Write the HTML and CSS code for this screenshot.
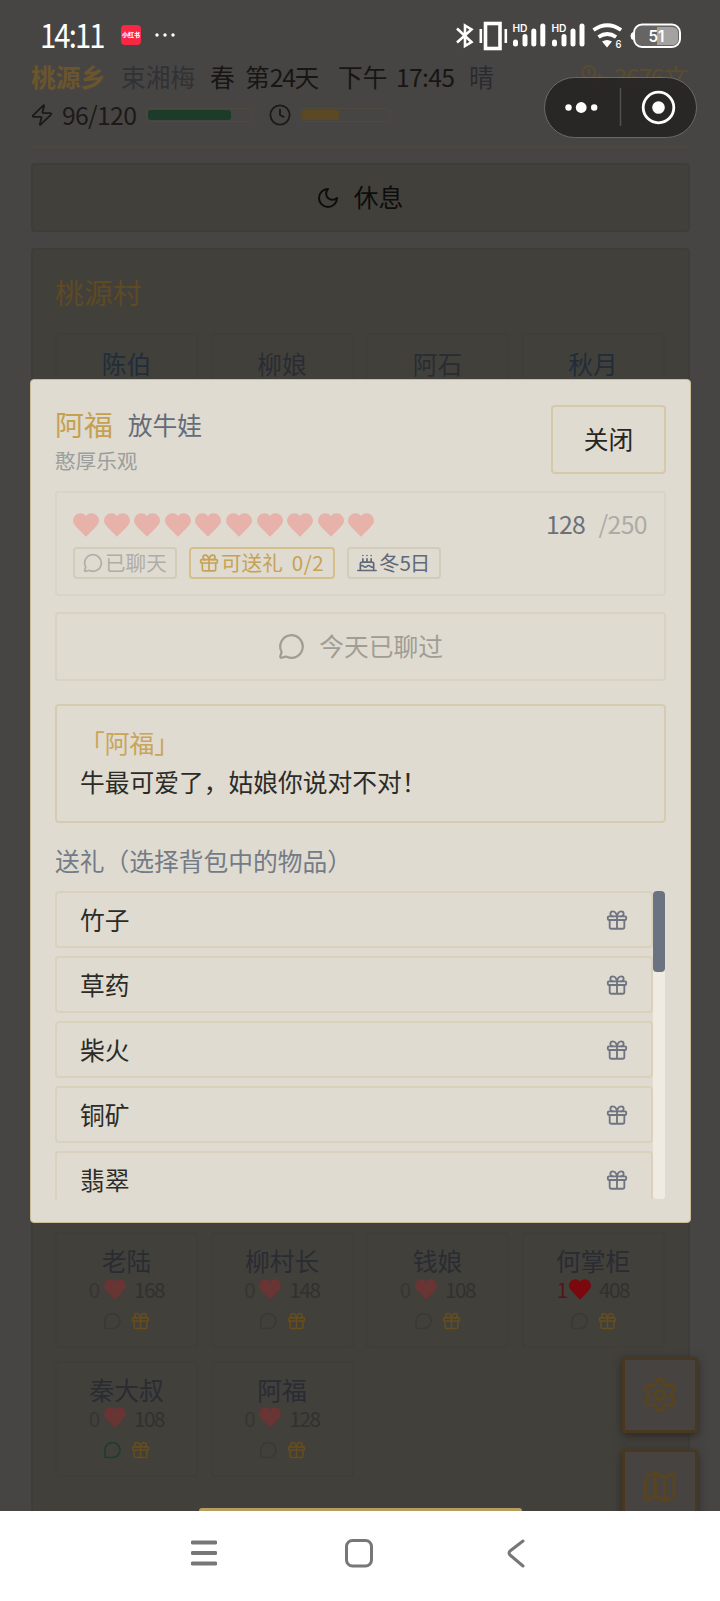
FILE: index.html
```html
<!DOCTYPE html>
<html lang="zh-CN">
<head>
<meta charset="utf-8">
<title>桃源乡</title>
<link rel="stylesheet" href="styles.css">
</head>
<body>
<svg class="sprite" width="0" height="0">
  <symbol id="heart" viewBox="1 2 22 20" preserveAspectRatio="none"><path fill="currentColor" stroke="none" d="M19.4 14.4C21 12.8 23 10.900 23 8.300A6.200 6.200 0 0 0 16.800 2.200C14.900 2.200 13.500 2.800 12 4.400 10.500 2.800 9.100 2.200 7.200 2.200A6.200 6.200 0 0 0 1 8.300C1 10.900 3 12.800 4.600 14.400L12 21.800Z"/></symbol>
  <symbol id="chat" viewBox="0 0 24 24"><path d="M2.992 16.342a2 2 0 0 1 .094 1.167l-1.065 3.290a1 1 0 0 0 1.236 1.168l3.413-.998a2 2 0 0 1 1.099.092 10 10 0 1 0-4.777-4.719"/></symbol>
  <symbol id="bubble" viewBox="0 0 24 24"><path d="M2.500 21.500V12A9.500 9.500 0 1 1 12 21.500Z"/></symbol>
  <symbol id="gift" viewBox="0 0 24 24"><rect x="2" y="8" width="20" height="4" rx="1"/><path d="M12 8v13.500M20 12v7.500a2 2 0 0 1-2 2H6a2 2 0 0 1-2-2V12M7.500 8a2.500 2.500 0 0 1 0-5.500A4.800 8 0 0 1 12 8a4.800 8 0 0 1 4.500-5.500 2.500 2.500 0 0 1 0 5.500"/></symbol>
  <symbol id="cake" viewBox="0 0 24 24"><path d="M20 21v-8a2 2 0 0 0-2-2H6a2 2 0 0 0-2 2v8M4 16s.5-1 2-1 2.500 2 4 2 2.500-2 4-2 2.500 2 4 2 2-1 2-1M1 21h22M7 7v4M12 7v4M17 7v4M7 3h.01M12 3h.01M17 3h.01"/></symbol>
  <symbol id="moon" viewBox="0 0 24 24"><path d="M12 3a6 6 0 0 0 9 9 9 9 0 1 1-9-9Z"/></symbol>
  <symbol id="clock" viewBox="0 0 24 24"><circle cx="12" cy="12" r="10.500"/><path d="M12 6v6l4 2"/></symbol>
  <symbol id="zap" viewBox="0 0 24 24"><path d="M3 14a1 1 0 0 1-.78-1.630L13.500 1.500a.5.5 0 0 1 .86.46L12.500 9A1 1 0 0 0 13.400 10H21a1 1 0 0 1 .78 1.630L10.500 22.500a.5.5 0 0 1-.86-.46L11.500 15A1 1 0 0 0 10.600 14Z"/></symbol>
  <symbol id="gear" viewBox="0 0 24 24"><path d="M9.671 4.136a2.340 2.340 0 0 1 4.659 0 2.340 2.340 0 0 0 3.319 1.915 2.340 2.340 0 0 1 2.330 4.033 2.340 2.340 0 0 0 0 3.831 2.340 2.340 0 0 1-2.330 4.033 2.340 2.340 0 0 0-3.319 1.915 2.340 2.340 0 0 1-4.659 0 2.340 2.340 0 0 0-3.320-1.915 2.340 2.340 0 0 1-2.330-4.033 2.340 2.340 0 0 0 0-3.831A2.340 2.340 0 0 1 6.350 6.051a2.340 2.340 0 0 0 3.319-1.915"/><circle cx="12" cy="12" r="3"/></symbol>
  <symbol id="map" viewBox="0 0 24 24"><path d="M14.106 5.553a2 2 0 0 0 1.788 0l3.659-1.830A1 1 0 0 1 21 4.619v12.764a1 1 0 0 1-.553.894l-4.553 2.277a2 2 0 0 1-1.788 0l-4.212-2.106a2 2 0 0 0-1.788 0l-3.659 1.830A1 1 0 0 1 3 19.381V6.618a1 1 0 0 1 .553-.894l4.553-2.277a2 2 0 0 1 1.788 0zM15 5.764v15M9 3.236v15"/></symbol>
  <symbol id="coins" viewBox="0 0 24 24"><circle cx="8.500" cy="8" r="7"/><path d="M19.500 11A6 6 0 1 1 11 18.500M7.500 5.500h1v5M17.500 14l.7.700-2.800 2.800"/></symbol>
</svg>

<div class="screen">
  <header class="topline">
    <b class="brand">桃源乡</b><span class="player">束湘梅</span><span class="season">春</span><span class="day">第<i class="n">24</i>天</span><span class="part">下午</span><span class="time n">17:45</span><span class="weather">晴</span>
    <span class="money"><svg class="i"><use href="#coins"/></svg><span><i class="n">3676</i>文</span></span>
  </header>
  <div class="energy">
    <svg class="i"><use href="#zap"/></svg><span class="n value">96/120</span><div class="bar stamina"><div></div></div>
    <svg class="i clock"><use href="#clock"/></svg><div class="bar day-bar"><div></div></div>
  </div>
  <div class="rest"><svg class="i"><use href="#moon"/></svg><span>休息</span></div>
  <section class="village">
    <h2>桃源村</h2>
    <div class="grid first">
      <div class="card friend"><p>陈伯</p></div><div class="card"><p>柳娘</p></div><div class="card"><p>阿石</p></div><div class="card friend"><p>秋月</p></div>
    </div>
    <div class="grid">
      <div class="card"><p>老陆</p><div class="love"><i class="n">0</i><svg><use href="#heart"/></svg><i class="n">168</i></div><div class="acts"><svg class="i"><use href="#bubble"/></svg><svg class="i gift"><use href="#gift"/></svg></div></div>
      <div class="card"><p>柳村长</p><div class="love"><i class="n">0</i><svg><use href="#heart"/></svg><i class="n">148</i></div><div class="acts"><svg class="i"><use href="#bubble"/></svg><svg class="i gift"><use href="#gift"/></svg></div></div>
      <div class="card"><p>钱娘</p><div class="love"><i class="n">0</i><svg><use href="#heart"/></svg><i class="n">108</i></div><div class="acts"><svg class="i"><use href="#bubble"/></svg><svg class="i gift"><use href="#gift"/></svg></div></div>
      <div class="card"><p>何掌柜</p><div class="love full"><i class="n">1</i><svg><use href="#heart"/></svg><i class="n">408</i></div><div class="acts"><svg class="i"><use href="#bubble"/></svg><svg class="i gift"><use href="#gift"/></svg></div></div>
      <div class="card"><p>秦大叔</p><div class="love"><i class="n">0</i><svg><use href="#heart"/></svg><i class="n">108</i></div><div class="acts"><svg class="i ready"><use href="#bubble"/></svg><svg class="i gift"><use href="#gift"/></svg></div></div>
      <div class="card"><p>阿福</p><div class="love"><i class="n">0</i><svg><use href="#heart"/></svg><i class="n">128</i></div><div class="acts"><svg class="i"><use href="#bubble"/></svg><svg class="i gift"><use href="#gift"/></svg></div></div>
    </div>
  </section>
</div>

<div class="fabs"><div><svg class="i"><use href="#gear"/></svg></div><div><svg class="i"><use href="#map"/></svg></div></div>
<div class="toast"></div>

<div class="modal">
  <div class="head">
    <div class="who"><div class="names"><b>阿福</b><span>放牛娃</span></div><p>憨厚乐观</p></div>
    <div class="close">关闭</div>
  </div>
  <div class="status">
    <div class="hearts">
      <svg><use href="#heart"/></svg><svg><use href="#heart"/></svg><svg><use href="#heart"/></svg><svg><use href="#heart"/></svg><svg><use href="#heart"/></svg><svg><use href="#heart"/></svg><svg><use href="#heart"/></svg><svg><use href="#heart"/></svg><svg><use href="#heart"/></svg><svg><use href="#heart"/></svg>
      <span class="n points">128</span><span class="n max">/250</span>
    </div>
    <div class="tags">
      <div class="tag t-chat"><svg class="i"><use href="#chat"/></svg><span>已聊天</span></div>
      <div class="tag t-gift"><svg class="i"><use href="#gift"/></svg><span>可送礼</span><i class="n">0/2</i></div>
      <div class="tag t-birth"><svg class="i"><use href="#cake"/></svg><span>冬<i class="n">5</i>日</span></div>
    </div>
  </div>
  <div class="talk"><svg class="i"><use href="#chat"/></svg><span>今天已聊过</span></div>
  <div class="speech"><p class="speaker">「阿福」</p><p>牛最可爱了，姑娘你说对不对！</p></div>
  <p class="label">送礼（选择背包中的物品）</p>
  <div class="bag">
    <div class="items">
      <div class="item"><span>竹子</span><svg class="i"><use href="#gift"/></svg></div>
      <div class="item"><span>草药</span><svg class="i"><use href="#gift"/></svg></div>
      <div class="item"><span>柴火</span><svg class="i"><use href="#gift"/></svg></div>
      <div class="item"><span>铜矿</span><svg class="i"><use href="#gift"/></svg></div>
      <div class="item"><span>翡翠</span><svg class="i"><use href="#gift"/></svg></div>
    </div>
    <div class="track"><div></div></div>
  </div>
</div>

<div class="sysbar">
  <span class="hour">14:11</span><span class="app">小红书</span>
  <svg class="more" width="20" height="6"><g fill="#fff"><circle cx="2" cy="3" r="1.700"/><circle cx="10" cy="3" r="1.700"/><circle cx="18" cy="3" r="1.700"/></g></svg>
  <svg class="signals" width="232" height="32" viewBox="452 18 232 32">
    <g fill="none" stroke="#fff" stroke-width="2.600"><path d="M457 27.500l14.500 13.500-6.500 4V24.500l6.500 4L457 41.500"/><rect x="485.500" y="22.500" width="14.500" height="25" stroke-width="3.600"/><path d="M480.800 28v14M505.800 28v14"/></g>
    <g stroke="#fff" stroke-width="5" stroke-linecap="round"><path d="M515.500 41v2M525 35.500v7.500M533.800 30v13M542.800 25v18M554.500 41v2M564 35.500v7.500M573 30v13M582 25v18"/></g>
    <g fill="#fff" font-family="Inter, sans-serif"><text x="512.500" y="30.500" font-size="10" font-weight="600" textLength="15" lengthAdjust="spacingAndGlyphs">HD</text><text x="551.500" y="30.500" font-size="10" font-weight="600" textLength="15" lengthAdjust="spacingAndGlyphs">HD</text><text x="615.500" y="47" font-size="11" font-weight="500" textLength="6" lengthAdjust="spacingAndGlyphs">6</text></g>
    <g fill="none" stroke="#fff" stroke-width="3.800"><path d="M593.500 29q13.800-9.500 27.600 0M598.500 36q8.800-6 17.600 0"/></g><path fill="#fff" d="M602 40.500q5-3 10 0l-5 6z"/>
    <rect x="634" y="23.500" width="46" height="22.500" rx="8" fill="#666564" stroke="#fff" stroke-width="2"/><path fill="#a3a2a1" d="M657 26h15q6 0 6 6v6q0 6-6 6h-15z"/><path fill="#fff" d="M633 31v8q-2.500-1-2.500-4t2.500-4z"/>
    <text x="648.500" y="40.500" fill="#fff" font-family="Inter, sans-serif" font-size="15.500" font-weight="600" textLength="16" lengthAdjust="spacingAndGlyphs">51</text>
  </svg>
</div>
<div class="capsule"><svg width="150" height="58" viewBox="0 0 150 58"><g fill="#fff"><circle cx="23.500" cy="29.500" r="3.200"/><circle cx="36.200" cy="29.500" r="5.400"/><circle cx="49.200" cy="29.500" r="3.200"/><circle cx="113.500" cy="29.500" r="6.300"/></g><path d="M75.500 10v38" stroke="#51504e" stroke-width="1.500"/><circle cx="113.500" cy="29.500" r="15.300" fill="none" stroke="#fff" stroke-width="2.800"/></svg></div>

<div class="navbar">
  <svg width="26" height="36" viewBox="0 0 26 36"><path d="M1.500 7.500h23M1.500 18h23M1.500 28.500h23" stroke="#777" stroke-width="3.800" stroke-linecap="round"/></svg>
  <svg class="home" width="28" height="36" viewBox="0 0 28 36"><rect x="1.500" y="5.500" width="25" height="25.500" rx="6" fill="none" stroke="#777" stroke-width="3"/></svg>
  <svg width="20" height="36" viewBox="0 0 20 36"><path d="M17 6L4 16q-1.800 2 0 4L17 31" fill="none" stroke="#777" stroke-width="3" stroke-linecap="round" stroke-linejoin="round"/></svg>
</div>
</body>
</html>
```
FILE: styles.css
```css
* { box-sizing: border-box; }
body {
  position: relative; margin: 0; width: 720px; height: 1601px; overflow: hidden;
  background: #474543; color: #171614;
  font: 24.75px/36px "Noto Sans CJK SC", sans-serif;
}
p, h2 { margin: 0; font-weight: 400; }
i { font-style: normal; }
.n { letter-spacing: -1.35px; }
.i { display: block; flex: none; fill: none; stroke: currentColor; stroke-width: 2; stroke-linecap: round; stroke-linejoin: round; }
.sprite { position: absolute; }
svg { flex: none; }

.screen { height: 1511px; overflow: hidden; padding: 58px 30px 0 31px; }
.topline { display: flex; align-items: center; height: 36px; white-space: nowrap; }
.topline > span, .topline > b { flex: none; }
.brand { width: 90px; color: #6a552c; font-weight: 700; }
.player { width: 89px; color: #303236; }
.season { width: 35px; }
.day { width: 93px; }
.part { width: 58px; }
.time { width: 73px; letter-spacing: -.700px; }
.weather { color: #292b30; }
.money { display: flex; align-items: center; gap: 11px; margin-left: auto; margin-right: 2px; color: #5c4c2d; }
.money .i { width: 22px; height: 22px; }
.energy { display: flex; align-items: center; height: 36px; margin-top: 3px; color: #1b1a18; }
.energy .i { width: 22px; height: 22px; }
.energy .value { width: 84px; margin: -2px 0 0 9px; letter-spacing: -.700px; }
.bar { height: 14px; padding: 1px; border: 1px solid #4e493f; border-radius: 4px; }
.bar div { height: 100%; border-radius: 3px; }
.stamina { width: 107px; }
.stamina div { width: 83px; background: #1c3b28; }
.energy .clock { margin-left: 16px; }
.day-bar { width: 91px; margin-left: 9px; }
.day-bar div { width: 37px; background: #5b4924; }
.rest {
  display: flex; align-items: center; justify-content: center; gap: 14px;
  height: 69px; margin-top: 30px; background: #42403b; border: 2px solid #3e3d39; border-radius: 4px;
  position: relative; color: #0d0d0b;
}
.rest::before { content: ""; position: absolute; left: 0; right: 0; top: -19px; height: 2px; background: #4d483f; }
.rest .i { width: 24px; height: 24px; }
.rest span { margin: -3px 2px 0 0; }
.village { height: 1290px; margin-top: 16px; padding: 26px 22px; background: #42403b; border: 2px solid #3e3d39; border-radius: 4px; }
.village h2 { height: 36px; color: #5e4a23; font-size: 28.900px; line-height: 31px; }
.grid { display: grid; grid-template-columns: repeat(4, 143px); gap: 12.500px; width: 611px; }
.first { height: 116px; margin: 21px 0 783px; }
.card { height: 116px; padding-top: 8px; border: 2px solid #3f3e39; border-radius: 4px; text-align: center; color: #292c33; }
.first .card { padding-top: 10px; }
.card p { height: 36px; }
.friend { color: #202d3a; }
.love { display: flex; align-items: center; justify-content: center; height: 22px; margin-top: 1px; font-size: 20.600px; line-height: 22px; color: #31312f; }
.love i { margin-top: -2px; }
.love svg { width: 22px; height: 21px; margin: -2px 8px 0 5px; color: #683434; }
.love i:first-child { color: #373633; }
.full svg { margin-left: 2px; color: #7a080c; }
.full i:first-child { color: #561416; }
.acts { display: flex; justify-content: center; gap: 9px; margin-top: 10px; color: #393936; }
.acts .i { width: 19px; height: 20px; }
.acts .gift { color: #654d1e; }
.acts .ready { color: #1d3e2a; }

.fabs {
  position: absolute; left: 606px; top: 1341px; display: grid; gap: 16px; align-content: start;
  width: 114px; height: 170px; padding: 16px; overflow: hidden; color: #594420;
}
.fabs div { display: grid; place-items: center; width: 76px; height: 76px; border: 3px solid #493820; border-radius: 3px; background: #464340; box-shadow: 0 3px 10px #2b2824; }
.fabs .i { width: 38px; height: 38px; }
.toast { position: absolute; left: 199px; top: 1508px; width: 323px; height: 3px; border-radius: 4px 4px 0 0; background: #b79d60; }

.modal {
  position: absolute; left: 30px; top: 379px; width: 661px; height: 844px; padding: 25px 24px 23px;
  background: #dfdbd0; border: 1px solid #c9bd99; border-radius: 4px;
}
.head { display: flex; justify-content: space-between; height: 68px; }
.who { width: 400px; }
.names { display: flex; align-items: center; height: 38px; gap: 15px; color: #646b79; }
.names b { margin-top: -2px; color: #c5a052; font-weight: 400; font-size: 28.900px; }
.who p { height: 31px; font-size: 20.600px; line-height: 34px; color: #9c9d9f; }
.close { width: 115px; height: 69px; border: 2px solid #d5c9a7; border-radius: 4px; text-align: center; line-height: 62px; color: #262522; }
.status { height: 105px; margin-top: 18px; padding: 17px 16px; border: 2px solid #dad3c6; border-radius: 4px; }
.hearts { display: flex; align-items: center; height: 29px; gap: 4.600px; }
.hearts svg { width: 26px; height: 24px; margin-top: 1px; color: #e6b2aa; }
.points { margin: -4px 0 0 auto; color: #6b7079; letter-spacing: -.800px; }
.max { margin: -4px 1px 0 9px; color: #adaba7; letter-spacing: -.600px; }
.tags { display: flex; gap: 12px; margin-top: 8px; font-size: 20.600px; }
.tag { display: flex; align-items: center; flex: none; height: 32px; padding-left: 8px; border: 2px solid #d3ccbb; border-radius: 4px; line-height: 26px; white-space: nowrap; }
.tag > span, .tag > .n { margin-top: -2px; }
.tag .i { width: 20px; height: 20px; margin-right: 2px; }
.t-chat { width: 104px; color: #b0ada7; }
.t-gift { width: 146px; border-color: #d4bf8d; color: #c6a254; }
.t-gift > .n { margin-left: 9px; letter-spacing: .5px; }
.t-birth { width: 94px; color: #626978; }
.talk { display: flex; align-items: center; justify-content: center; gap: 14px; height: 69px; margin-top: 16px; border: 2px solid #dad1c3; border-radius: 4px; color: #a19d95; }
.talk span { margin-top: -3px; }
.talk .i { width: 27px; height: 27px; }
.speech { height: 119px; margin-top: 23px; padding: 18px 23px; border: 2px solid #d5cbb0; border-radius: 4px; color: #2c2b27; }
.speech p { height: 39px; line-height: 36px; }
.speech .speaker { color: #c9a55a; }
.label { height: 36px; margin-top: 20px; line-height: 34px; color: #747b88; }
.bag { display: flex; height: 308px; margin-top: 12px; overflow: hidden; }
.items { width: 598px; height: 308px; overflow: hidden; }
.item { display: flex; align-items: center; justify-content: space-between; height: 57px; margin-bottom: 8px; padding: 0 23px; border: 2px solid #dad1bc; border-radius: 4px; color: #2c2b27; }
.item span { margin-top: -2px; }
.item .i { width: 22px; height: 22px; color: #6e7480; }
.track { width: 12px; height: 308px; background: #efebe2; border-radius: 3px; }
.track div { height: 81px; border-radius: 4px; background: #6b7280; }

.sysbar { position: absolute; left: 0; top: 0; width: 720px; height: 58px; display: flex; align-items: center; padding: 12px 36px 0 40px; color: #fff; }
.hour { width: 81px; margin-top: -2px; font-size: 32.500px; letter-spacing: -2.100px; line-height: 40px; transform: scaleX(.9); transform-origin: left; }
.app { display: grid; place-items: center; width: 20px; height: 20px; border-radius: 4px; background: #fa2744; font-size: 6px; font-weight: 900; line-height: 20px; white-space: nowrap; }
.more { margin-left: 14px; }
.signals { margin-left: auto; }
.capsule { position: absolute; left: 544px; top: 77px; width: 153px; height: 61px; border: 1.500px solid #6b6a68; border-radius: 31px; background: rgba(38, 36, 35, .9); }
.capsule svg { display: block; }
.navbar { position: absolute; left: 0; top: 1511px; width: 720px; height: 90px; padding: 24px 194px 0 191px; display: flex; justify-content: space-between; align-items: flex-start; background: #fff; }
.home { margin-right: 5px; }
```
